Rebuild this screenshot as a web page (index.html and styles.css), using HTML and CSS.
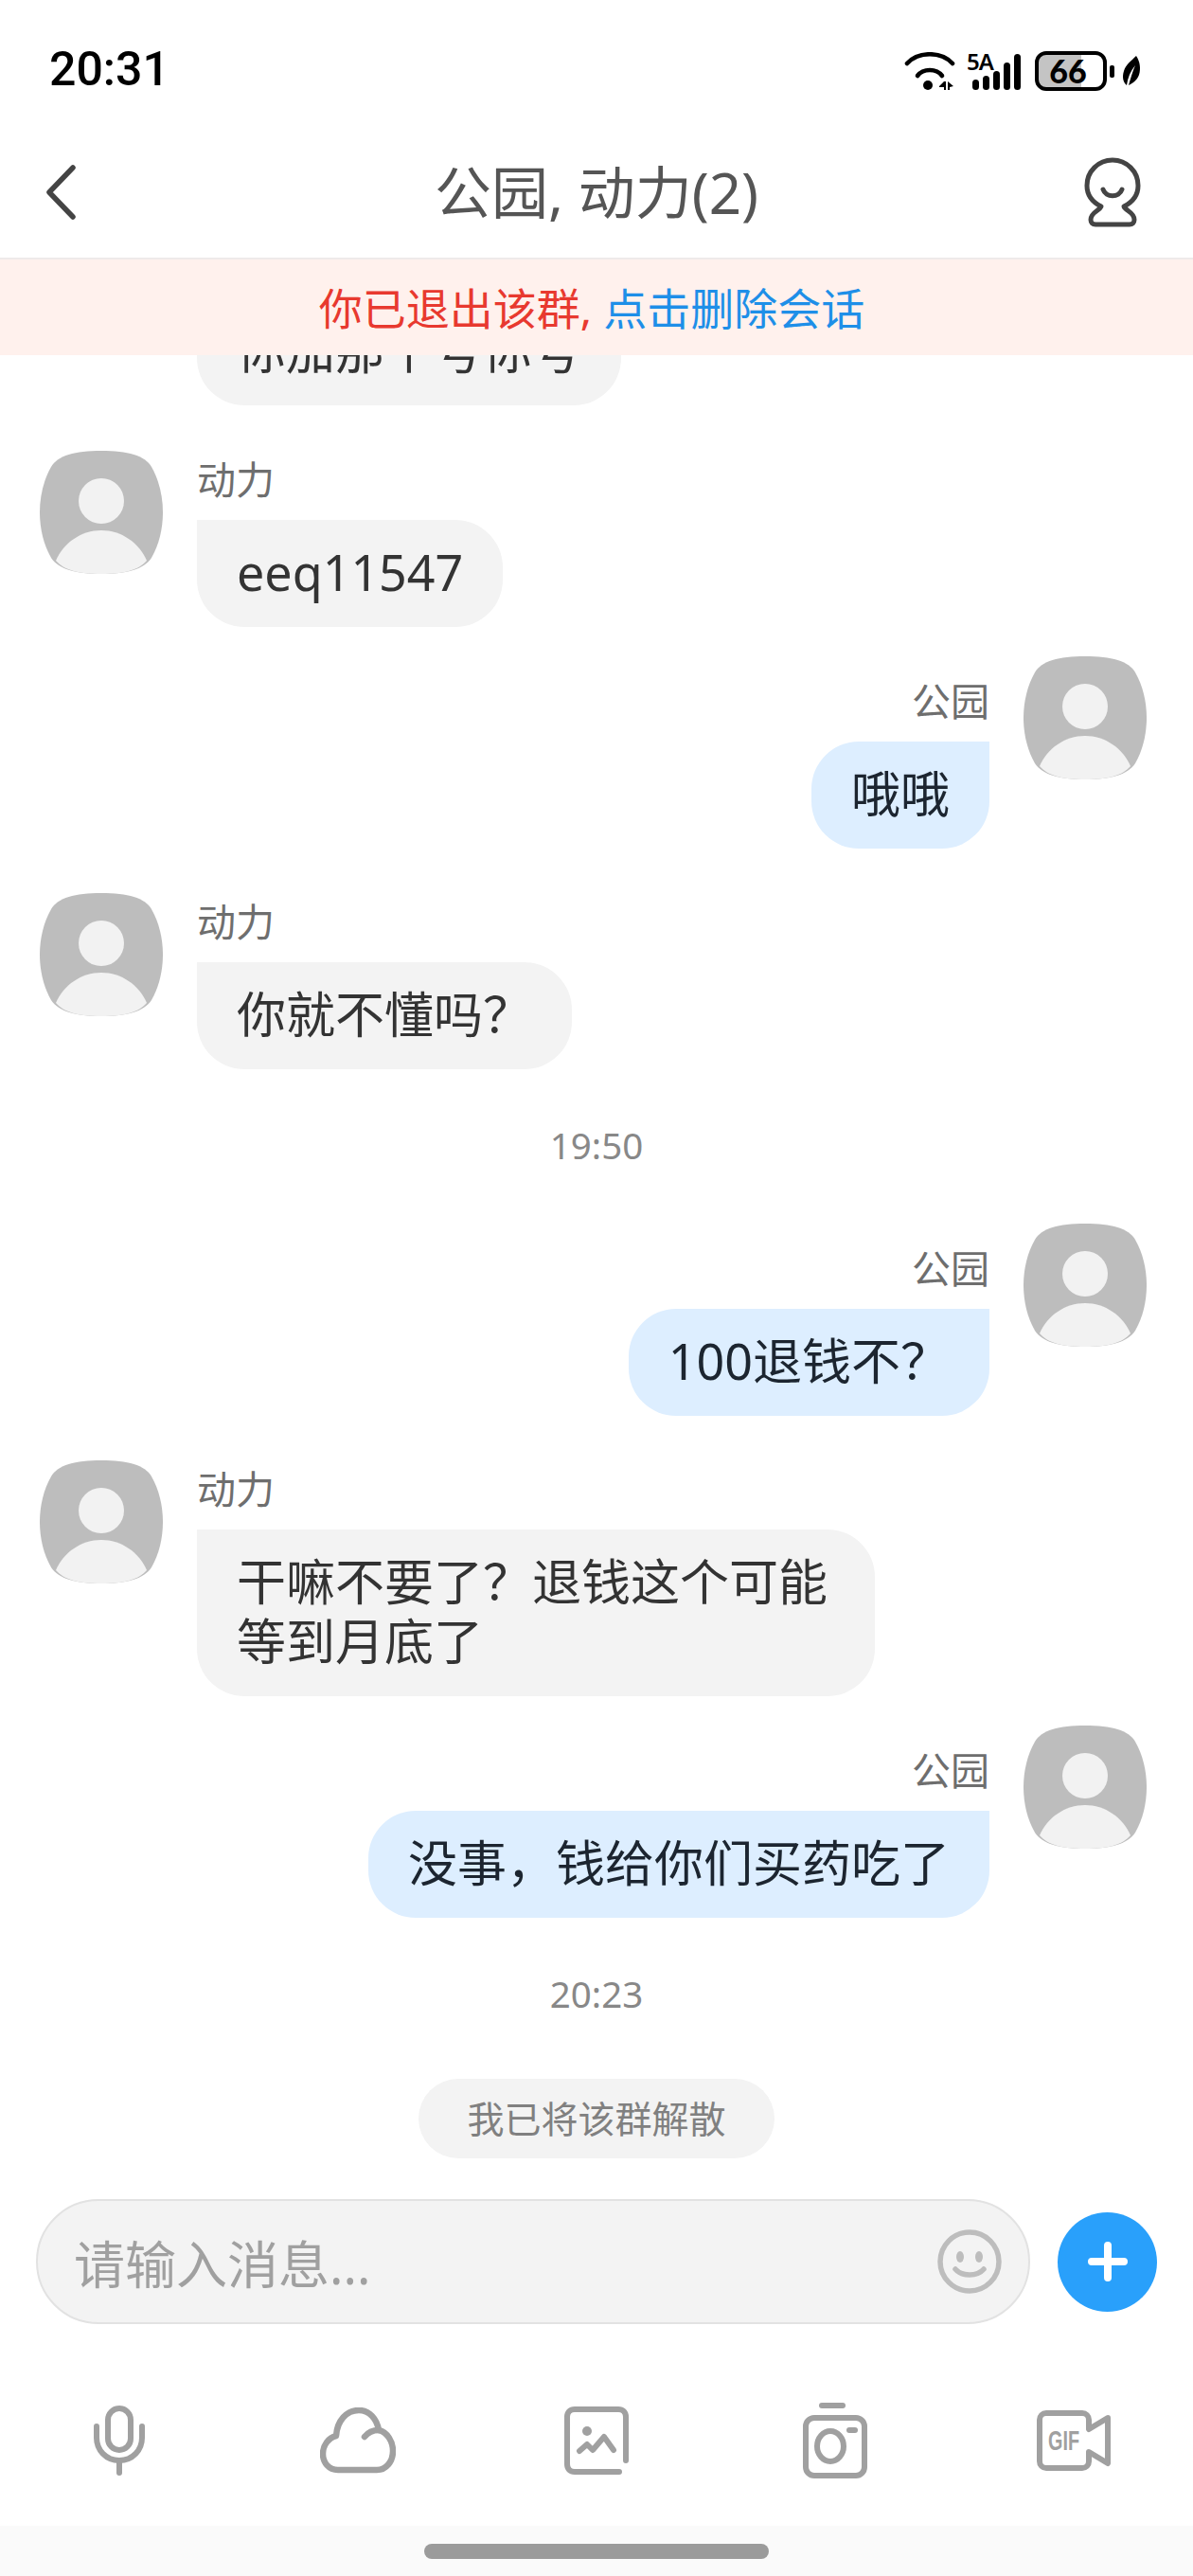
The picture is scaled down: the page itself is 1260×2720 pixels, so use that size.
FILE: index.html
```html
<!DOCTYPE html>
<html lang="zh-CN">

<head>
  <meta charset="UTF-8">
  <title>公园, 动力(2)</title>
  <link rel="stylesheet" href="styles.css">
</head>

<body>

  <!-- shared avatar -->
  <svg class="defs" width="0" height="0">
    <symbol id="avatar" viewBox="0 0 130 130">
      <path fill="#bdbdbd" d="M65 0C93 0 111 5 118 17C126 31 130 48 130 65C130 82 126 99 118 113C110 125 92 130 65 130C38 130 20 125 12 113C4 99 0 82 0 65C0 48 4 31 12 17C19 5 37 0 65 0Z" />
      <circle fill="#f2f2f2" cx="65" cy="53" r="24" />
      <path fill="#f2f2f2" d="M17 116C25 97 44 84 65 84C86 84 105 97 113 116C104 126 90 130 65 130C40 130 26 126 17 116Z" />
    </symbol>
  </svg>

  <div class="phone">

    <!-- status bar -->
    <div class="status-bar">
      <span class="status-time">20:31</span>
      <div class="status-icons">
        <svg width="54" height="41" viewBox="0 0 54 41">
          <g fill="none" stroke="#000" stroke-width="4.6" stroke-linecap="round">
            <path d="M3 12C15 -1 39 -1 51 12" />
            <path d="M14 25C20 17 34 17 40 25" />
          </g>
          <circle cx="25" cy="35" r="5" fill="#000" />
          <path d="M37 36L42 31H44V40H42V37H37ZM46 31L52 36L48 37V40H46Z" fill="#000" />
        </svg>
        <div class="signal">
          <span class="signal-label">5A</span>
          <span class="signal-bar bar-1"></span>
          <span class="signal-bar bar-2"></span>
          <span class="signal-bar bar-3"></span>
          <span class="signal-bar bar-4"></span>
          <span class="signal-bar bar-5"></span>
        </div>
        <div class="battery"><span class="battery-level">66</span></div>
        <span class="battery-nub"></span>
        <svg width="20" height="32" viewBox="0 0 20 32">
          <path fill="#000" d="M15 0C19 6 20 13 18 20C16 26 11 29 7 31C9 24 11 17 14 10C9 16 6 23 5 31C1 28 0 22 2 16C4 9 10 5 15 0Z" />
        </svg>
      </div>
    </div>

    <!-- title bar -->
    <nav class="navbar">
      <svg width="34" height="58" viewBox="0 0 34 58">
        <path d="M30 3L5 29L30 55" fill="none" stroke="#444" stroke-width="5.5" stroke-linecap="round" stroke-linejoin="round" />
      </svg>
      <span class="navbar-title">公园, 动力(2)</span>
      <svg width="60" height="74" viewBox="0 0 60 74">
        <g fill="none" stroke="#444" stroke-width="5" stroke-linecap="round" stroke-linejoin="round">
          <path d="M18 52C8 47 3 39 3 30C3 15 15 3 30 3C45 3 57 15 57 30C57 39 52 47 42 52C44 57 53 58 53 66C53 69 51 71 48 71H12C9 71 7 69 7 66C7 58 16 57 18 52Z" />
          <path d="M20 34C23 43 37 43 40 34" />
        </g>
      </svg>
    </nav>

    <!-- left group notice -->
    <div class="notice-bar">
      <span class="notice-red">你已退出该群,</span> <span class="notice-blue">点击删除会话</span>
    </div>

    <!-- messages -->
    <main class="chat">

      <div class="msg msg-clipped">
        <div class="bubble">你加那个号你号</div>
      </div>

      <div class="msg">
        <svg class="avatar"><use href="#avatar" /></svg>
        <div class="msg-body">
          <div class="msg-name">动力</div>
          <div class="bubble">eeq11547</div>
        </div>
      </div>

      <div class="msg msg-right">
        <svg class="avatar"><use href="#avatar" /></svg>
        <div class="msg-body">
          <div class="msg-name">公园</div>
          <div class="bubble">哦哦</div>
        </div>
      </div>

      <div class="msg">
        <svg class="avatar"><use href="#avatar" /></svg>
        <div class="msg-body">
          <div class="msg-name">动力</div>
          <div class="bubble">你就不懂吗？</div>
        </div>
      </div>

      <div class="chat-time">19:50</div>

      <div class="msg msg-right">
        <svg class="avatar"><use href="#avatar" /></svg>
        <div class="msg-body">
          <div class="msg-name">公园</div>
          <div class="bubble">100退钱不？</div>
        </div>
      </div>

      <div class="msg">
        <svg class="avatar"><use href="#avatar" /></svg>
        <div class="msg-body">
          <div class="msg-name">动力</div>
          <div class="bubble bubble-wide">干嘛不要了？退钱这个可能等到月底了</div>
        </div>
      </div>

      <div class="msg msg-right">
        <svg class="avatar"><use href="#avatar" /></svg>
        <div class="msg-body">
          <div class="msg-name">公园</div>
          <div class="bubble">没事，钱给你们买药吃了</div>
        </div>
      </div>

      <div class="chat-time">20:23</div>

      <div class="chat-system">我已将该群解散</div>
    </main>

    <!-- input row -->
    <div class="input-row">
      <div class="input-box">
        <span class="input-placeholder">请输入消息...</span>
        <svg width="70" height="70" viewBox="0 0 70 70">
          <circle cx="35" cy="35" r="31" fill="none" stroke="#bdbdbd" stroke-width="5.5" />
          <ellipse cx="25" cy="30" rx="4" ry="6" fill="#bdbdbd" />
          <ellipse cx="45" cy="30" rx="4" ry="6" fill="#bdbdbd" />
          <path d="M20 43C27 51 43 51 50 43" fill="none" stroke="#bdbdbd" stroke-width="5.5" stroke-linecap="round" />
        </svg>
      </div>
      <div class="plus-btn">
        <svg width="44" height="44" viewBox="0 0 44 44">
          <path d="M22 5V39M5 22H39" stroke="#fff" stroke-width="8" stroke-linecap="round" />
        </svg>
      </div>
    </div>

    <!-- tool icons -->
    <div class="tools">
      <svg width="54" height="74" viewBox="0 0 54 74">
        <g fill="none" stroke="#a0a0a0" stroke-width="6" stroke-linecap="round">
          <rect x="15" y="3" width="24" height="44" rx="12" />
          <path d="M3 22V34C3 47 13 58 27 58C41 58 51 47 51 34V22" />
          <path d="M27 58V71" />
        </g>
      </svg>
      <svg width="80" height="70" viewBox="0 0 80 70">
        <g fill="none" stroke="#a0a0a0" stroke-width="6.5" stroke-linecap="round" stroke-linejoin="round">
          <path d="M19 66C9 66 3 58 3 49C3 40 9 32 17 30C18 14 28 3 41 3C52 3 60 12 62 24C71 26 77 36 77 46C77 57 70 66 60 66Z" />
          <path d="M47 31C51 26 57 24 62 24" />
        </g>
      </svg>
      <svg width="68" height="72" viewBox="0 0 68 72">
        <g fill="none" stroke="#a0a0a0" stroke-width="6" stroke-linecap="round" stroke-linejoin="round">
          <path d="M58 69H11C6 69 3 66 3 61V11C3 6 6 3 11 3H57C62 3 65 6 65 11V57" />
          <path d="M16 47L24 40L30 46L42 32L52 46" />
        </g>
        <circle cx="24" cy="26" r="5" fill="#a0a0a0" />
      </svg>
      <svg width="68" height="80" viewBox="0 0 68 80">
        <g fill="none" stroke="#a0a0a0" stroke-width="6" stroke-linecap="round">
          <path d="M20 3H42" />
          <rect x="3" y="16" width="62" height="61" rx="9" />
          <ellipse cx="29" cy="46" rx="14" ry="16" />
          <path d="M49 29H55" />
        </g>
      </svg>
      <svg width="78" height="64" viewBox="0 0 78 64">
        <g fill="none" stroke="#a0a0a0" stroke-width="6" stroke-linejoin="round">
          <path d="M55 20V10C55 6 52 3 48 3H10C6 3 3 6 3 10V54C3 58 6 61 10 61H48C52 61 55 58 55 54V44L75 56V8Z" />
        </g>
        <text class="gif-label" x="12" y="42" textLength="33" lengthAdjust="spacingAndGlyphs">GIF</text>
      </svg>
    </div>

    <!-- gesture bar -->
    <div class="home-area">
      <span class="home-bar"></span>
    </div>
  </div>

</body>

</html>
```

FILE: styles.css
```css
/* base */
* {
  box-sizing: border-box;
}

body {
  margin: 0;
  background-color: #fff;
  font-family: "Noto Sans", "Noto Sans CJK SC", sans-serif;
  color: #333;
}

.defs {
  position: absolute;
}

.phone {
  width: 1260px;
  height: 2720px;
  display: flex;
  flex-direction: column;
  overflow: hidden;
}

/* status bar */
.status-bar {
  flex: none;
  height: 122px;
  padding: 47px 55px 0 52px;
  display: flex;
  justify-content: space-between;
  align-items: flex-start;
}

.status-time {
  font-family: "Roboto", sans-serif;
  font-size: 50px;
  line-height: 52px;
  font-weight: 500;
  color: #000;
}

.status-icons {
  display: flex;
  align-items: center;
  margin-top: 7px;
}

.signal {
  position: relative;
  width: 57px;
  height: 40px;
  margin-left: 12px;
  display: flex;
  justify-content: flex-end;
  align-items: flex-end;
  gap: 4px;
}

.signal-label {
  position: absolute;
  left: 0;
  top: -3px;
  font-size: 24px;
  line-height: 26px;
  font-weight: 600;
  letter-spacing: -1px;
  color: #000;
}

.signal-bar {
  width: 7px;
  background-color: #000;
  border-radius: 3.5px;
}

.bar-1 {
  height: 11px;
}

.bar-2 {
  height: 15px;
}

.bar-3 {
  height: 20px;
}

.bar-4 {
  height: 29px;
}

.bar-5 {
  height: 38px;
}

.battery {
  width: 76px;
  height: 42px;
  margin-left: 15px;
  border: 4px solid #000;
  border-radius: 12px;
  background: linear-gradient(to right, #c4c4c4 66%, #fff 66%);
  display: flex;
  justify-content: center;
  align-items: center;
}

.battery-level {
  font-family: "Lato", sans-serif;
  font-size: 34px;
  line-height: 34px;
  font-weight: 900;
  color: #000;
  margin-right: 6px;
}

.battery-nub {
  width: 5px;
  height: 13px;
  margin: 0 8px 0 3px;
  background-color: #000;
  border-radius: 2px;
}

/* title bar */
.navbar {
  flex: none;
  height: 150px;
  padding: 12px 55px 0 47px;
  display: flex;
  justify-content: space-between;
  align-items: center;
  position: relative;
}

.navbar-title {
  position: absolute;
  left: 0;
  right: 0;
  text-align: center;
  font-size: 60px;
  line-height: 76px;
  color: #555;
}

.notice-bar {
  flex: none;
  height: 103px;
  padding-right: 10px;
  border-top: 2px solid #eeeaea;
  background-color: #fff1ed;
  text-align: center;
  font-size: 46px;
  line-height: 103px;
}

.notice-red {
  color: #e8392f;
}

.notice-blue {
  color: #1e8fe8;
}

/* messages */
.chat {
  flex: 1;
  min-height: 0;
  padding-bottom: 43px;
  display: flex;
  flex-direction: column;
  justify-content: flex-end;
  overflow: hidden;
}

.msg {
  flex: none;
  display: flex;
  gap: 36px;
  padding: 0 49px 0 42px;
  margin-bottom: 31px;
}

.msg-clipped {
  padding-left: 208px;
  margin-bottom: 48px;
}

.msg-right {
  flex-direction: row-reverse;
  margin-bottom: 47px;
}

.avatar {
  flex: none;
  width: 130px;
  height: 130px;
}

.msg-body {
  display: flex;
  flex-direction: column;
  align-items: flex-start;
}

.msg-right .msg-body {
  align-items: flex-end;
  padding-top: 17px;
}

.msg-name {
  height: 73px;
  font-size: 41px;
  line-height: 60px;
  color: #6e6e6e;
}

.bubble {
  padding: 23px 42px 27px;
  font-size: 52px;
  line-height: 63px;
  color: #333;
  background-color: #f3f3f3;
  border-radius: 0 50px 50px 50px;
}

.msg-right .bubble {
  color: #1c2530;
  background-color: #ddeeff;
  border-radius: 50px 0 50px 50px;
}

.bubble-wide {
  width: 716px;
}

.chat-time {
  flex: none;
  margin: 21px 0 55px;
  text-align: center;
  font-size: 38.5px;
  line-height: 56px;
  color: #888;
}

.msg-right + .chat-time {
  margin-top: 5px;
  margin-bottom: 62px;
}

.chat-system {
  flex: none;
  align-self: center;
  width: 376px;
  height: 84px;
  border-radius: 42px;
  background-color: #f3f3f3;
  text-align: center;
  font-size: 39px;
  line-height: 84px;
  color: #808080;
}

/* input row */
.input-row {
  flex: none;
  height: 132px;
  padding: 0 38px;
  display: flex;
  justify-content: space-between;
  align-items: center;
}

.input-box {
  width: 1050px;
  height: 132px;
  padding: 0 27px 0 38px;
  border: 2px solid #e2e2e2;
  border-radius: 66px;
  background-color: #f3f3f3;
  display: flex;
  justify-content: space-between;
  align-items: center;
}

.input-placeholder {
  font-size: 54px;
  color: #a0a0a0;
}

.plus-btn {
  width: 105px;
  height: 105px;
  border-radius: 50%;
  background-color: #29a0fb;
  display: flex;
  justify-content: center;
  align-items: center;
}

/* tool icons */
.tools {
  flex: none;
  height: 213px;
  padding-top: 32px;
  display: grid;
  grid-template-columns: repeat(5, 252px);
  justify-items: center;
  align-items: center;
}

.gif-label {
  font-family: "Liberation Sans", sans-serif;
  font-size: 29px;
  font-weight: 700;
  fill: #a0a0a0;
}

/* gesture bar */
.home-area {
  flex: none;
  height: 53px;
  padding-top: 19px;
  background-color: #fafafa;
  display: flex;
  justify-content: center;
  align-items: flex-start;
}

.home-bar {
  width: 364px;
  height: 16px;
  border-radius: 8px;
  background-color: #9b9b9b;
}
```
